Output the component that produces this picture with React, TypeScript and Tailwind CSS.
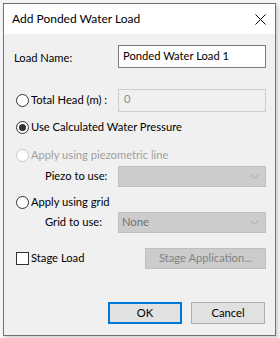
const font = { fontFamily: 'Lato, "Noto Sans", sans-serif' };

const Radio = ({ checked, disabled }: { checked?: boolean; disabled?: boolean }) => (
  <span
    className={
      "w-[13px] h-[13px] rounded-full border bg-white flex items-center justify-center shrink-0 " +
      (disabled ? "border-[#cccccc]" : "border-[#333333]")
    }
  >
    {checked && <span className="w-[7px] h-[7px] rounded-full bg-[#333333]" />}
  </span>
);

const Chevron = () => (
  <svg width="9" height="5" viewBox="0 0 9 5" className="mr-[6px]">
    <path d="M0.5 0.5 L4.5 4.5 L8.5 0.5" fill="none" stroke="#a8a8a8" strokeWidth="1" />
  </svg>
);

const App = () => {
  return (
    <div className="w-[280px] h-[338px] bg-[#f4f4f4] pt-[3px] pl-[3px] text-[11.2px] text-black whitespace-nowrap" style={font}>
      <div className="w-[273px] h-[333px] border border-[#707070] bg-[#f0f0f0] flex flex-col shadow-[2px_2px_3px_rgba(0,0,0,0.15)]">
        {/* Title bar */}
        <div className="h-[30px] bg-white flex items-center justify-between pl-[8px] pr-[8px]">
          <span className="text-[12px]">Add Ponded Water Load</span>
          <svg width="11" height="11" viewBox="0 0 11 11" className="mr-[1px]">
            <path d="M0.5 0.5 L10.5 10.5 M10.5 0.5 L0.5 10.5" stroke="#000" strokeWidth="1" />
          </svg>
        </div>

        <div className="flex flex-col pl-[10px] pr-[9px]">
          <div className="mt-[11px] h-[23px] flex items-center justify-between">
            <span className="mt-[4px]">Load Name:</span>
            <div className="w-[148px] h-[23px] bg-white border border-[#7a7a7a] flex items-center pl-[4px] pb-[1px]">
              Ponded Water Load 1
            </div>
          </div>

          <div className="mt-[21px] h-[23px] flex items-center justify-between">
            <div className="flex items-center gap-[2px] pl-[2px]">
              <Radio />
              <span>Total Head (m) :</span>
            </div>
            <div className="w-[148px] h-[23px] bg-[#f0f0f0] border border-[#cccccc] flex items-center pl-[5px] text-[#8a8a8a] pb-[3px]">
              0
            </div>
          </div>

          <div className="mt-[7px] h-[16px] flex items-center gap-[2px] pl-[2px]">
            <Radio checked />
            <span>Use Calculated Water Pressure</span>
          </div>

          <div className="mt-[12px] h-[16px] flex items-center gap-[2px] pl-[2px] text-[#a0a0a0]">
            <Radio disabled />
            <span>Apply using piezometric line</span>
          </div>

          <div className="mt-[3px] h-[21px] flex items-center justify-between">
            <span className="pl-[31px]">Piezo to use:</span>
            <div className="w-[148px] h-[21px] bg-[#cccccc] border border-[#c0c0c0] flex items-center justify-end">
              <Chevron />
            </div>
          </div>

          <div className="mt-[7px] h-[16px] flex items-center gap-[2px] pl-[2px]">
            <Radio />
            <span>Apply using grid</span>
          </div>

          <div className="mt-[2px] h-[21px] flex items-center justify-between">
            <span className="pl-[31px]">Grid to use:</span>
            <div className="w-[148px] h-[21px] bg-[#cccccc] border border-[#c0c0c0] flex items-center justify-between pl-[3px] text-[#707070]">
              <span>None</span>
              <Chevron />
            </div>
          </div>

          <div className="mt-[15px] h-[21px] flex items-center justify-between">
            <div className="flex items-center gap-[2px] pl-[2px]">
              <span className="w-[13px] h-[13px] border border-[#333333] bg-white" />
              <span>Stage Load</span>
            </div>
            <div className="w-[121px] h-[21px] bg-[#cccccc] border border-[#bfbfbf] flex items-center justify-center text-[#838383]">
              Stage Application...
            </div>
          </div>

          <div className="mt-[33px] h-[22px] flex items-center justify-end gap-[9px] pr-[1px]">
            <div className="w-[74px] h-[22px] bg-[#e1e1e1] border-2 border-[#0078d7] flex items-center justify-center">
              OK
            </div>
            <div className="w-[74px] h-[22px] bg-[#e1e1e1] border border-[#adadad] flex items-center justify-center">
              Cancel
            </div>
          </div>
        </div>
      </div>
    </div>
  );
};

export default App;
